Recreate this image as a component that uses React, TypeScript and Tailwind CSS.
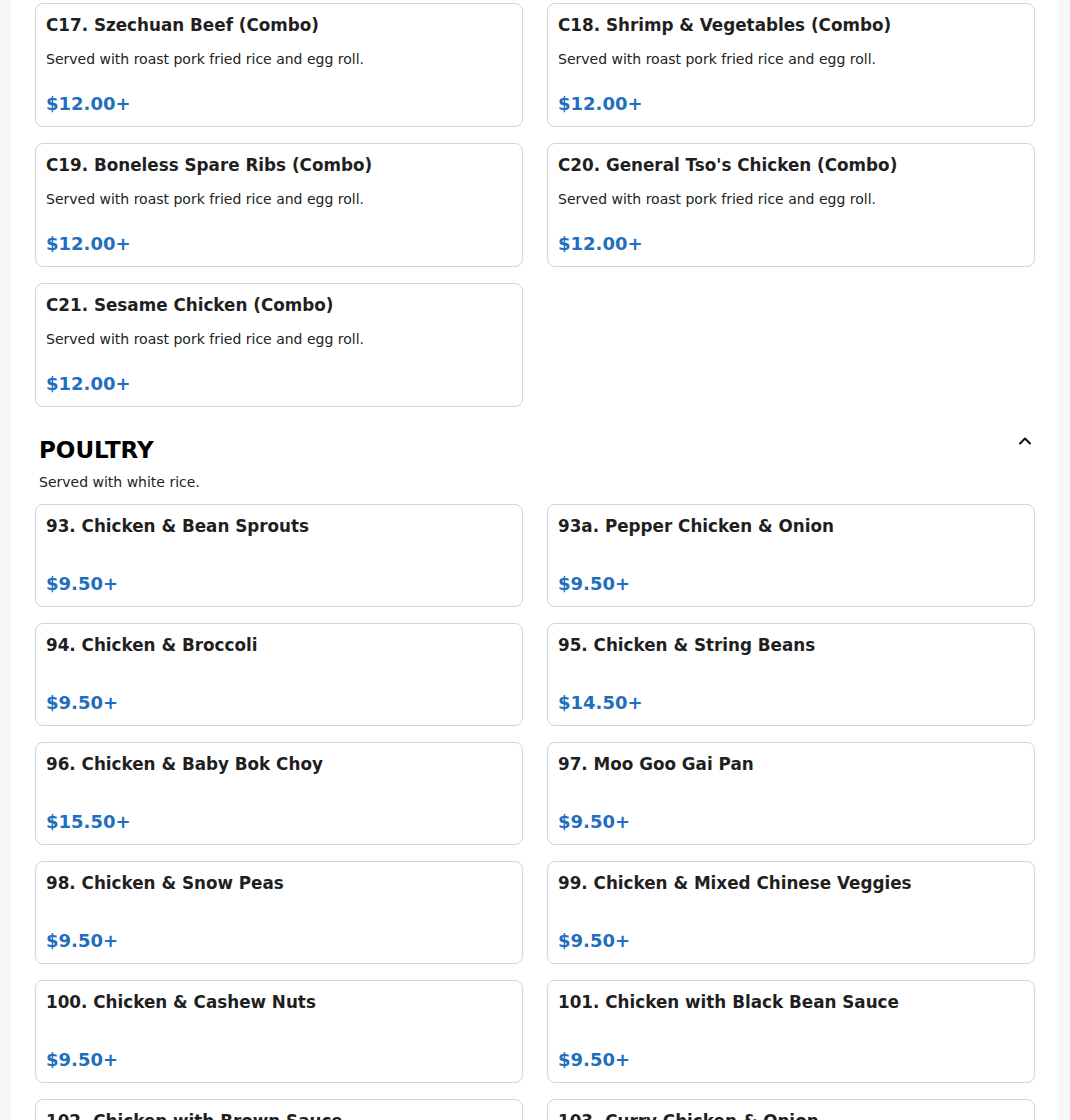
import { ChevronUp } from "lucide-react";

type Item = { name: string; desc?: string; price: string };

const combos: Item[] = [
  { name: "C17. Szechuan Beef (Combo)", desc: "Served with roast pork fried rice and egg roll.", price: "$12.00+" },
  { name: "C18. Shrimp & Vegetables (Combo)", desc: "Served with roast pork fried rice and egg roll.", price: "$12.00+" },
  { name: "C19. Boneless Spare Ribs (Combo)", desc: "Served with roast pork fried rice and egg roll.", price: "$12.00+" },
  { name: "C20. General Tso's Chicken (Combo)", desc: "Served with roast pork fried rice and egg roll.", price: "$12.00+" },
  { name: "C21. Sesame Chicken (Combo)", desc: "Served with roast pork fried rice and egg roll.", price: "$12.00+" },
];

const poultry: Item[] = [
  { name: "93. Chicken & Bean Sprouts", price: "$9.50+" },
  { name: "93a. Pepper Chicken & Onion", price: "$9.50+" },
  { name: "94. Chicken & Broccoli", price: "$9.50+" },
  { name: "95. Chicken & String Beans", price: "$14.50+" },
  { name: "96. Chicken & Baby Bok Choy", price: "$15.50+" },
  { name: "97. Moo Goo Gai Pan", price: "$9.50+" },
  { name: "98. Chicken & Snow Peas", price: "$9.50+" },
  { name: "99. Chicken & Mixed Chinese Veggies", price: "$9.50+" },
  { name: "100. Chicken & Cashew Nuts", price: "$9.50+" },
  { name: "101. Chicken with Black Bean Sauce", price: "$9.50+" },
  { name: "102. Chicken with Brown Sauce", price: "$9.50+" },
  { name: "103. Curry Chicken & Onion", price: "$9.50+" },
];

function ItemCard({ item }: { item: Item }) {
  return (
    <div className="flex flex-col rounded-lg border border-[#d4d4d4] bg-white px-[10px] pt-[11px] pb-[11px]">
      <h3 className="mb-[13px] text-[16.8px] font-bold leading-[21px] text-[#1f1f1f]">
        {item.name}
      </h3>
      {item.desc && <p className="text-sm leading-[21px] text-[#222]">{item.desc}</p>}
      <div className="mt-[23px] text-lg font-bold leading-[22px] text-[#1f6fbf]">
        {item.price}
      </div>
    </div>
  );
}

export default function App() {
  return (
    <div
      className="min-h-screen bg-[#f7f7f7]"
      style={{ fontFamily: '"DejaVu Sans", sans-serif' }}
    >
      <div className="mx-auto max-w-[1048px] bg-white px-6 pt-[3px] pb-10">
        <div className="grid grid-cols-2 gap-x-6 gap-y-4">
          {combos.map((c) => (
            <ItemCard key={c.name} item={c} />
          ))}
        </div>

        <section className="mt-[27px]">
          <div className="flex items-start justify-between">
            <h2 className="px-1 text-[23px] font-bold leading-8 text-black">POULTRY</h2>
            <button type="button" aria-label="Collapse" className="mt-[-3px] text-[#111]">
              <ChevronUp size={20} strokeWidth={2.5} />
            </button>
          </div>
          <p className="mt-[6px] mb-[11px] px-1 text-sm leading-[21px] text-[#222]">
            Served with white rice.
          </p>
          <div className="grid grid-cols-2 gap-x-6 gap-y-4">
            {poultry.map((p) => (
              <ItemCard key={p.name} item={p} />
            ))}
          </div>
        </section>
      </div>
    </div>
  );
}
